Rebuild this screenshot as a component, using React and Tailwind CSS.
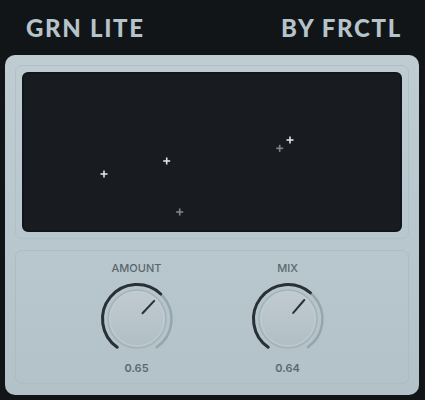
import React from 'react';

const dots = [
  { x: 82, y: 102, bright: true },
  { x: 144.7, y: 89, bright: true },
  { x: 157.7, y: 140, bright: false },
  { x: 268, y: 68, bright: true },
  { x: 257.7, y: 76.3, bright: false },
];

const START = 125;
const SWEEP = 290;

const polar = (cx, cy, r, deg) => {
  const a = (deg * Math.PI) / 180;
  return [cx + r * Math.cos(a), cy + r * Math.sin(a)];
};

const arcPath = (cx, cy, r, from, to) => {
  const [x1, y1] = polar(cx, cy, r, from);
  const [x2, y2] = polar(cx, cy, r, to);
  const large = to - from > 180 ? 1 : 0;
  return `M ${x1} ${y1} A ${r} ${r} 0 ${large} 1 ${x2} ${y2}`;
};

const Knob = ({ label, value }) => {
  const c = 38;
  const end = START + value * SWEEP;
  const [lx1, ly1] = polar(c, c, 8, end);
  const [lx2, ly2] = polar(c, c, 25, end);
  return (
    <div className="flex w-[90px] flex-col items-center">
      <div className="text-[11px] font-medium leading-[13px] text-[#5b676e]">{label}</div>
      <svg width="76" height="76" viewBox="0 0 76 76" className="mt-[6px]">
        <defs>
          <linearGradient id={`kg-${label}`} x1="0" y1="0" x2="0" y2="1">
            <stop offset="0" stopColor="#bfcbd0" />
            <stop offset="1" stopColor="#b1bec4" />
          </linearGradient>
        </defs>
        <path d={arcPath(c, c, 34.5, START, START + SWEEP)} fill="none" stroke="#97a5ac" strokeWidth="2.5" strokeLinecap="round" />
        <path d={arcPath(c, c, 34.5, START, end)} fill="none" stroke="#2a3136" strokeWidth="3" strokeLinecap="round" />
        <circle cx={c} cy={c} r="29" fill={`url(#kg-${label})`} stroke="#a4b2b9" strokeWidth="1.5" />
        <circle cx={c} cy={c} r="27" fill="none" stroke="#c3ced3" strokeWidth="1" />
        <line x1={lx1} y1={ly1} x2={lx2} y2={ly2} stroke="#2a3136" strokeWidth="2" strokeLinecap="round" />
      </svg>
      <div className="mt-[5px] text-[11px] font-semibold leading-[13px] text-[#5d6970]">{value.toFixed(2)}</div>
    </div>
  );
};

export default function App() {
  return (
    <div
      className="flex h-[400px] w-[425px] flex-col bg-[#111518]"
      style={{ fontFamily: 'Inter, "Noto Sans", sans-serif' }}
    >
      <div
        className="flex h-[55px] items-center justify-between pl-[26px] pr-[23px] text-[24px] font-black tracking-[0.07em] text-[#b5c4cb]"
        style={{ fontFamily: 'Lato, "Open Sans", sans-serif' }}
      >
        <span>GRN LITE</span>
        <span>BY FRCTL</span>
      </div>

      <div className="ml-[5px] mr-[6px] flex h-[340px] flex-col gap-[11px] rounded-[10px] bg-gradient-to-b from-[#bfcdd3] to-[#b3c2c9] p-[10px] pb-[11px]">
        <div className="rounded-[7px] border border-[#b1c0c7] p-[6px]">
          <div className="h-[160px] rounded-[6px] border-2 border-[#10161b] bg-[#181c20]">
            <svg width="376" height="156" viewBox="2 2 376 156">
              {dots.map((d, i) => (
                <g key={i} stroke={d.bright ? '#dfe3e5' : '#80878c'} strokeWidth="1.6">
                  <line x1={d.x - 3.5} y1={d.y} x2={d.x + 3.5} y2={d.y} />
                  <line x1={d.x} y1={d.y - 3.5} x2={d.x} y2={d.y + 3.5} />
                </g>
              ))}
            </svg>
          </div>
        </div>

        <div className="flex h-[134px] justify-center gap-[61px] rounded-[7px] border border-[#adbcc3] pt-[11px]">
          <Knob label="AMOUNT" value={0.65} />
          <Knob label="MIX" value={0.64} />
        </div>
      </div>
    </div>
  );
}
